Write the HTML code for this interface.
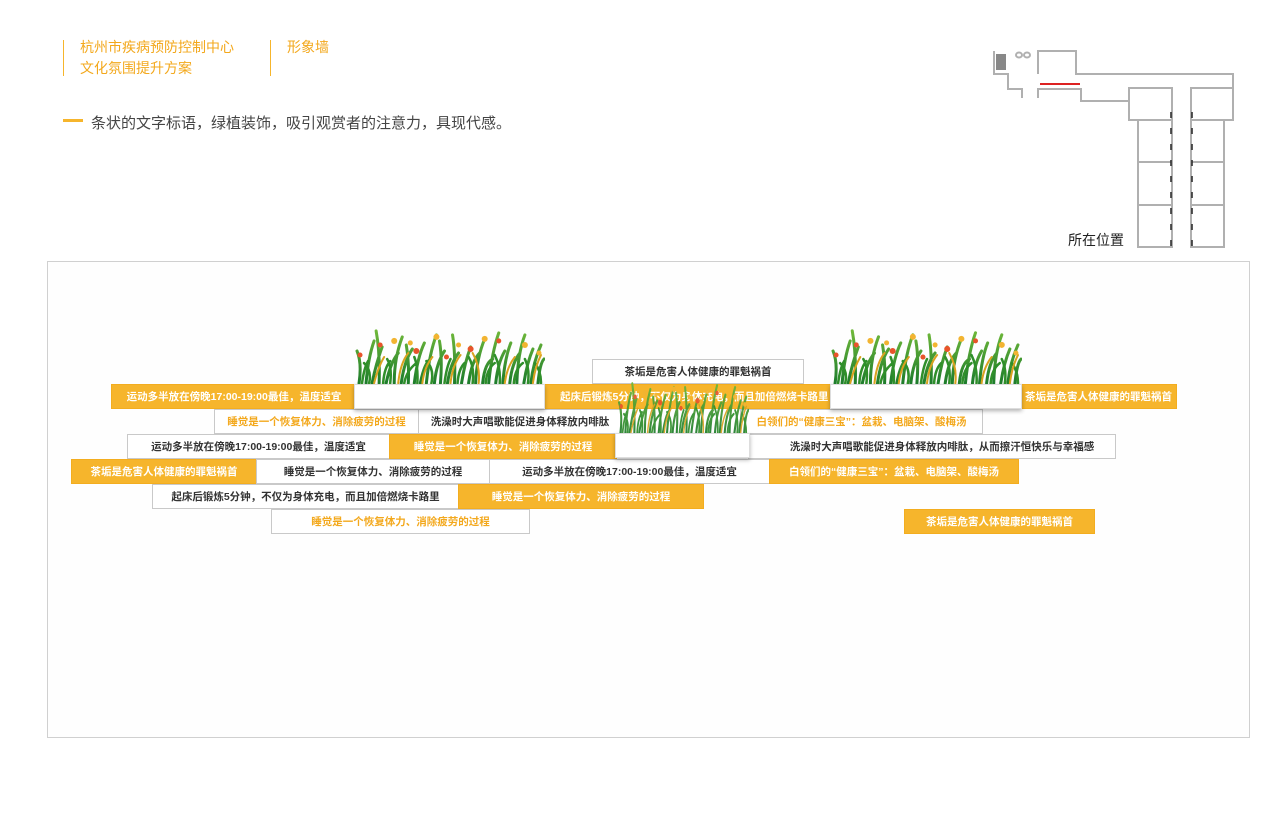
<!DOCTYPE html>
<html><head><meta charset="utf-8"><style>
*{margin:0;padding:0;box-sizing:border-box}
body{width:1280px;height:832px;background:#fff;position:relative;overflow:hidden;font-family:"Liberation Sans","Noto Sans CJK SC",sans-serif}
.a{position:absolute}
.b{position:absolute;height:25px;line-height:24px;font-size:10.5px;text-align:center;white-space:nowrap;font-weight:bold}
.o{background:#f6b52c;color:#fff;border:1px solid #f3ad1f}
.w{background:#fff;color:#333;border:1px solid #c9c9c9}
.wo{background:#fff;color:#f3a81c;border:1px solid #c9c9c9}
.pl{position:absolute;background:#fff;box-shadow:0 2px 4px rgba(0,0,0,.3);border:1px solid #ddd}
</style></head><body>
<div class="a" style="left:63px;top:40px;width:1px;height:36px;background:#f6b52c"></div>
<div class="a" style="left:80px;top:37px;font-size:14px;line-height:21px;color:#f3a81c">杭州市疾病预防控制中心<br>文化氛围提升方案</div>
<div class="a" style="left:270px;top:40px;width:1px;height:36px;background:#f6b52c"></div>
<div class="a" style="left:287px;top:37px;font-size:14px;line-height:21px;color:#f3a81c">形象墙</div>
<div class="a" style="left:63px;top:119px;width:20px;height:3px;background:#f6b52c"></div>
<div class="a" style="left:91px;top:112px;font-size:15px;color:#444">条状的文字标语，绿植装饰，吸引观赏者的注意力，具现代感。</div>

<svg class="a" style="left:0;top:0" width="1280" height="260" fill="none" stroke="#b0b0b0" stroke-width="2">
<rect x="996" y="54" width="10" height="16" fill="#888" stroke="none"/>
<path d="M994 51V74H1008V89H1022V98M1038 98V89H1081V101H1129V88H1172V120H1129V88M1038 74V51H1076V74H1233V120H1191V88H1233M1038 51V60M1038 66V74"/>
<ellipse cx="1019" cy="55" rx="3" ry="2.5"/><ellipse cx="1027" cy="55" rx="3" ry="2.5"/>
<path d="M1138 120V247H1172V120M1138 162H1172M1138 205H1172M1191 120V247H1224V120M1191 162H1224M1191 205H1224"/>
<path d="M1040 84H1080" stroke="#d22" stroke-width="2"/>
<path d="M1171 112V247M1192 112V247" stroke="#222" stroke-width="1.5" stroke-dasharray="6 10"/>
</svg>
<div class="a" style="left:1068px;top:230px;font-size:14px;color:#222">所在位置</div>

<div class="a" style="left:47px;top:261px;width:1203px;height:477px;border:1px solid #d0d0d0;background:#fefefe"></div>

<svg width="0" height="0" style="position:absolute">
<defs>
<linearGradient id="g" x1="0" y1="0" x2="0" y2="1"><stop offset="0" stop-color="#6fb83a"/><stop offset="1" stop-color="#1e7d2c"/></linearGradient>
<symbol id="gr" viewBox="0 0 190 60">
<g stroke-linecap="round" fill="none">
<g stroke="url(#g)" stroke-width="3">
<path d="M5 60Q8 40 3 28M12 60Q14 35 20 18M18 60Q22 40 28 24M25 60Q26 30 22 8M32 60Q36 40 44 30M40 60Q40 35 48 14M47 60Q50 38 58 26M54 60Q55 40 52 22M60 60Q63 35 70 20M66 60Q70 40 76 36M72 60Q75 30 82 12M80 60Q82 40 90 28M86 60Q88 35 85 18M93 60Q96 40 104 30M100 60Q101 30 98 12M107 60Q110 40 116 24M114 60Q117 38 125 30M121 60Q122 35 130 16M128 60Q130 40 138 36M134 60Q137 30 144 10M141 60Q143 40 150 28M148 60Q150 35 156 20M155 60Q157 40 165 30M162 60Q163 30 170 12M169 60Q172 40 178 26M176 60Q178 40 186 22M183 60Q185 40 189 36"/>
</g>
<g stroke="#2f8f2a" stroke-width="2.5">
<path d="M8 60Q10 45 14 38M15 60Q18 48 10 40M29 60Q30 45 36 38M36 60Q38 44 33 36M50 60Q52 48 62 40M63 60Q64 44 60 34M77 60Q80 46 72 38M90 60Q92 44 96 36M103 60Q104 46 110 40M118 60Q120 44 114 34M131 60Q132 46 140 40M145 60Q146 44 140 32M159 60Q160 46 168 40M173 60Q175 46 170 36M186 60Q186 48 180 40"/>
</g>
<g stroke="#d9a21f" stroke-width="2">
<path d="M20 60Q24 44 30 34M44 60Q46 40 54 30M68 60Q70 44 78 34M96 60Q98 42 106 32M124 60Q126 44 118 30M150 60Q152 44 160 34M178 60Q180 44 186 32"/>
</g>
</g>
<g fill="#e8542a"><circle cx="6" cy="32" r="2.5"/><circle cx="26" cy="22" r="2.5"/><circle cx="62" cy="28" r="3"/><circle cx="116" cy="26" r="3"/><circle cx="144" cy="18" r="2.5"/><circle cx="92" cy="34" r="2.5"/></g>
<g fill="#f2b431"><circle cx="40" cy="18" r="3"/><circle cx="82" cy="14" r="3"/><circle cx="130" cy="16" r="3"/><circle cx="170" cy="22" r="3"/><circle cx="104" cy="22" r="2.5"/><circle cx="56" cy="20" r="2.5"/><circle cx="184" cy="30" r="2.5"/></g>
</symbol>
</defs></svg>

<div class="b w" style="left:592px;top:359px;width:212px">茶垢是危害人体健康的罪魁祸首</div>
<div class="b o" style="left:111px;top:384px;width:246px">运动多半放在傍晚17:00-19:00最佳，温度适宜</div>
<div class="b o" style="left:543px;top:384px;width:290px;text-align:left;padding-left:16px">起床后锻炼5分钟，不仅为身体充电，而且加倍燃烧卡路里</div>
<div class="b o" style="left:1020px;top:384px;width:157px">茶垢是危害人体健康的罪魁祸首</div>

<div class="b wo" style="left:214px;top:409px;width:205px">睡觉是一个恢复体力、消除疲劳的过程</div>
<div class="b w" style="left:418px;top:409px;width:204px">洗澡时大声唱歌能促进身体释放内啡肽</div>
<div class="b wo" style="left:740px;top:409px;width:243px">白领们的“健康三宝”：盆栽、电脑架、酸梅汤</div>

<div class="b w" style="left:127px;top:434px;width:263px">运动多半放在傍晚17:00-19:00最佳，温度适宜</div>
<div class="b o" style="left:389px;top:434px;width:228px">睡觉是一个恢复体力、消除疲劳的过程</div>
<div class="b w" style="left:748px;top:434px;width:368px;padding-left:20px">洗澡时大声唱歌能促进身体释放内啡肽，从而擦汗恒快乐与幸福感</div>

<div class="b o" style="left:71px;top:459px;width:186px">茶垢是危害人体健康的罪魁祸首</div>
<div class="b w" style="left:256px;top:459px;width:234px">睡觉是一个恢复体力、消除疲劳的过程</div>
<div class="b w" style="left:489px;top:459px;width:281px">运动多半放在傍晚17:00-19:00最佳，温度适宜</div>
<div class="b o" style="left:769px;top:459px;width:250px">白领们的“健康三宝”：盆栽、电脑架、酸梅汤</div>

<div class="b w" style="left:152px;top:484px;width:307px">起床后锻炼5分钟，不仅为身体充电，而且加倍燃烧卡路里</div>
<div class="b o" style="left:458px;top:484px;width:246px">睡觉是一个恢复体力、消除疲劳的过程</div>

<div class="b wo" style="left:271px;top:509px;width:259px">睡觉是一个恢复体力、消除疲劳的过程</div>
<div class="b o" style="left:904px;top:509px;width:191px">茶垢是危害人体健康的罪魁祸首</div>

<div class="pl" style="left:354px;top:384px;width:191px;height:25px"></div>
<svg class="a" style="left:354px;top:322px" width="191" height="62"><use href="#gr"/></svg>
<div class="pl" style="left:830px;top:384px;width:192px;height:25px"></div>
<svg class="a" style="left:830px;top:322px" width="192" height="62"><use href="#gr"/></svg>
<div class="pl" style="left:615px;top:433px;width:135px;height:25px"></div>
<svg class="a" style="left:617px;top:376px;opacity:.92" width="132" height="57" viewBox="0 0 190 60" preserveAspectRatio="none"><use href="#gr"/></svg>
</body></html>
